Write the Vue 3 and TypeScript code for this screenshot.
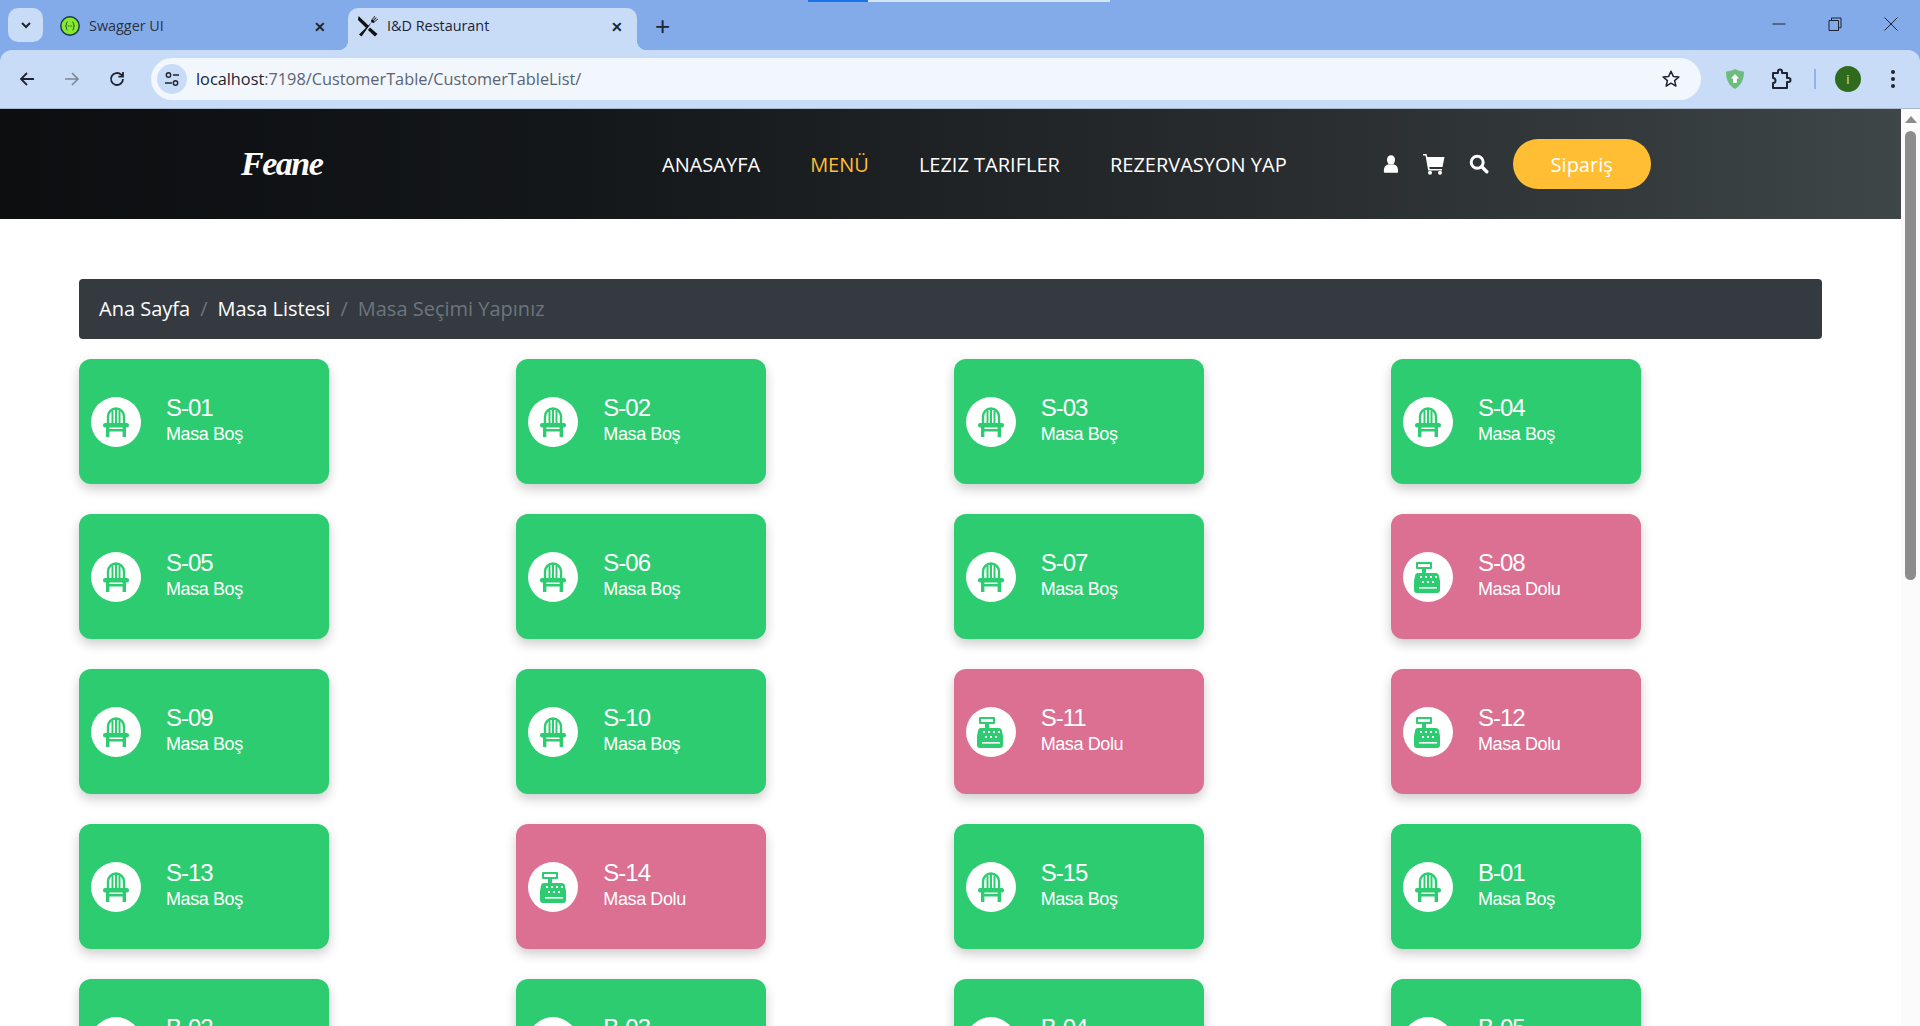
<script setup lang="ts">
interface CustomerTable {
  name: string;
  busy: boolean;
}

const busyNames = ['S-08', 'S-11', 'S-12', 'S-14'];
const names = [
  'S-01', 'S-02', 'S-03', 'S-04', 'S-05', 'S-06', 'S-07', 'S-08', 'S-09', 'S-10',
  'S-11', 'S-12', 'S-13', 'S-14', 'S-15', 'B-01', 'B-02', 'B-03', 'B-04', 'B-05',
];
const tables: CustomerTable[] = names.map((name) => ({ name, busy: busyNames.includes(name) }));
</script>

<template>
  <div class="window">
    <div class="tabstrip">
      <div class="tab-search">
        <svg width="12" height="12" viewBox="0 0 12 12"><path d="M2 4l4 4 4-4" fill="none" stroke="#1f2430" stroke-width="2" /></svg>
      </div>
      <div class="tab inactive">
        <svg class="favicon" width="20" height="20" viewBox="0 0 20 20">
          <circle cx="10" cy="10" r="9.2" fill="#85ea2d" stroke="#173647" stroke-width="1.4" />
          <path d="M7.6 6c-1.6 0-1 3-1.4 3.6-.2.3-.6.4-.8.4.2 0 .6.1.8.4.4.6-.2 3.6 1.4 3.6M12.4 6c1.6 0 1 3 1.4 3.6.2.3.6.4.8.4-.2 0-.6.1-.8.4-.4.6.2 3.6-1.4 3.6" fill="none" stroke="#173647" stroke-width=".9" />
          <path d="M8 10h.8M9.7 10h.8M11.3 10h.8" stroke="#173647" stroke-width="1" />
        </svg>
        <span class="tab-title">Swagger UI</span>
        <span class="tab-close">✕</span>
      </div>
      <div class="tab active">
        <svg class="favicon tools" width="22" height="22" viewBox="0 0 22 22">
          <path d="M1.500 1l10.500 10-2.400 2.400L1 5z" fill="#111" />
          <path d="M13 12.500l7.500 6.500-2.600 2.600-7-6.700z" fill="#111" />
          <path d="M2 19.500L14.500 7.500l-.5-2L17.500 1l.6.5-2.600 3.200.7.6L19 2.200l.7.6-2.900 3 .6.7 3-2.800.6.6-4.400 3.600-2-.4L4.500 21.500z" fill="#111" />
        </svg>
        <span class="tab-title">I&amp;D Restaurant</span>
        <span class="tab-close">✕</span>
      </div>
      <span class="new-tab">+</span>
      <div class="window-controls">
        <svg width="14" height="14" viewBox="0 0 14 14"><path d="M0.5 7h13" stroke="#1c2433" stroke-width="1" /></svg>
        <svg width="14" height="14" viewBox="0 0 14 14"><path d="M1 3.5h9.5v10H1zM3.5 3.5V1H13v9.800h-2.500" fill="none" stroke="#1c2433" stroke-width="1" /></svg>
        <svg width="14" height="14" viewBox="0 0 14 14"><path d="M0.5 0.5l13 13M13.5 0.5l-13 13" stroke="#1c2433" stroke-width="1" /></svg>
      </div>
    </div>

    <div class="toolbar">
      <svg class="tool" width="18" height="18" viewBox="0 0 18 18"><path d="M16 9H3M9 3L3 9l6 6" fill="none" stroke="#1f2430" stroke-width="1.8" /></svg>
      <svg class="tool" width="18" height="18" viewBox="0 0 18 18"><path d="M2 9h13M9 3l6 6-6 6" fill="none" stroke="#7d8796" stroke-width="1.6" /></svg>
      <svg class="tool" width="18" height="18" viewBox="0 0 18 18"><path d="M15 9a6 6 0 1 1-1.800-4.300L15 6.500M15 2v4.600h-4.600" fill="none" stroke="#1f2430" stroke-width="1.8" /></svg>
      <div class="omnibox">
        <span class="tune">
          <svg width="16" height="16" viewBox="0 0 16 16">
            <circle cx="4.500" cy="4" r="2.200" fill="none" stroke="#1f2430" stroke-width="1.4" />
            <circle cx="11.500" cy="12" r="2.200" fill="none" stroke="#1f2430" stroke-width="1.4" />
            <path d="M9 4h6M1 12h7" stroke="#1f2430" stroke-width="1.4" />
          </svg>
        </span>
        <span class="url">localhost<span class="url-rest">:7198/CustomerTable/CustomerTableList/</span></span>
        <svg class="star" width="20" height="20" viewBox="0 0 20 20"><path d="M10 2.200l2.300 5.200 5.600.5-4.300 3.700 1.300 5.500L10 14.200l-4.900 2.900 1.300-5.500L2.100 7.900l5.600-.5z" fill="none" stroke="#1f2430" stroke-width="1.5" stroke-linejoin="round" /></svg>
      </div>
      <svg class="shield" width="20" height="22" viewBox="0 0 20 22">
        <path d="M10 1c3 1.600 5.500 2.200 9 2.500 0 7.500-2.500 14-9 17.500C3.500 17.500 1 11 1 3.500 4.500 3.200 7 2.600 10 1z" fill="#6cbd7d" />
        <path d="M10 6l4 4.500h-2.200V15H8.200v-4.500H6z" fill="#fff" />
      </svg>
      <svg class="puzzle" width="22" height="22" viewBox="0 0 22 22">
        <path d="M3 5h5V3.500a2 2 0 0 1 4 0V5h5v5h1.500a2 2 0 0 1 0 4H17v6H3v-5a2.500 2.500 0 0 0 0-5z" fill="none" stroke="#1f2430" stroke-width="2" stroke-linejoin="round" />
      </svg>
      <span class="divider"></span>
      <span class="avatar">i</span>
      <svg class="dots" width="6" height="20" viewBox="0 0 6 20"><circle cx="3" cy="3" r="2" fill="#1f2430" /><circle cx="3" cy="10" r="2" fill="#1f2430" /><circle cx="3" cy="17" r="2" fill="#1f2430" /></svg>
    </div>

    <div class="viewport">
      <div class="page">
        <header class="site-header">
          <a class="brand">Feane</a>
          <nav class="site-nav">
            <a>ANASAYFA</a>
            <a class="current">MENÜ</a>
            <a>LEZIZ TARIFLER</a>
            <a>REZERVASYON YAP</a>
          </nav>
          <div class="user-options">
            <svg width="16" height="18" viewBox="0 0 16 18">
              <ellipse cx="8" cy="5" rx="4" ry="4.800" fill="#fff" />
              <path d="M1 17.500c-.6-5 1.200-7.500 4.500-8.300 1.500 1 3.500 1 5 0 3.300.8 5.100 3.300 4.500 8.300-1 .4-13 .4-14 0z" fill="#fff" />
            </svg>
            <svg width="22" height="21" viewBox="0 0 22 21">
              <path d="M0 0h3.500l.8 3H21.500L19.500 13H6.200l.5 2H19v1.500H5.200L2.500 1.500H0z" fill="#fff" />
              <circle cx="7" cy="18.800" r="2" fill="#fff" />
              <circle cx="17" cy="18.800" r="2" fill="#fff" />
            </svg>
            <svg width="20" height="20" viewBox="0 0 20 20">
              <circle cx="8.200" cy="8.200" r="6" fill="none" stroke="#fff" stroke-width="3" />
              <path d="M12.800 12.800l5 5" stroke="#fff" stroke-width="3.400" stroke-linecap="round" />
            </svg>
            <a class="order-btn">Sipariş</a>
          </div>
        </header>

        <main class="content">
          <ol class="breadcrumb">
            <li><a>Ana Sayfa</a></li>
            <li><a>Masa Listesi</a></li>
            <li class="current">Masa Seçimi Yapınız</li>
          </ol>
          <div class="table-grid">
            <div v-for="table in tables" :key="table.name" class="table-cell">
              <div class="table-card" :class="{ busy: table.busy }">
                <span class="table-icon">
                  <svg v-if="table.busy" width="27" height="32" viewBox="0 0 27 32">
                    <path fill-rule="evenodd" d="M3 1h14a1 1 0 0 1 1 1v5a1 1 0 0 1-1 1h-5v4h10c1.500 0 2.500 1 2.800 2l1.200 6v9a3 3 0 0 1-3 3H3a3 3 0 0 1-3-3v-9l1.200-6c.3-1.200 1.300-2 2.800-2h4V8H3a1 1 0 0 1-1-1V2a1 1 0 0 1 1-1zm1 2v3h12V3z" fill="#2ecc71" />
                    <g fill="#fff">
                      <rect x="6" y="15" width="2" height="2" /><rect x="11" y="15" width="2" height="2" /><rect x="16" y="15" width="2" height="2" /><rect x="21" y="15" width="2" height="2" />
                      <rect x="8" y="20" width="2" height="2" /><rect x="13" y="20" width="2" height="2" /><rect x="18" y="20" width="2" height="2" />
                      <rect x="5" y="26" width="18" height="1.600" />
                    </g>
                  </svg>
                  <svg v-else width="26" height="30" viewBox="0 0 26 30">
                    <path d="M5 17V9.500a8 8 0 0 1 16 0V17" fill="none" stroke="#2ecc71" stroke-width="2.400" />
                    <path d="M9.500 3.500V17M13 2v15M16.500 3.500V17" stroke="#2ecc71" stroke-width="2" />
                    <rect x="0" y="16" width="26" height="4.500" rx="2" fill="#2ecc71" />
                    <path d="M3 20h3.400v10H3zM19.600 20H23v10h-3.400zM3 22h20v2.600H3z" fill="#2ecc71" />
                  </svg>
                </span>
                <div class="table-text">
                  <div class="table-name">{{ table.name }}</div>
                  <div class="table-state">{{ table.busy ? 'Masa Dolu' : 'Masa Boş' }}</div>
                </div>
              </div>
            </div>
          </div>
        </main>
      </div>

      <div class="scrollbar">
        <span class="scroll-arrow"></span>
        <span class="scroll-thumb"></span>
      </div>
    </div>
  </div>
</template>

<style>
html,
body {
  margin: 0;
  height: 100%;
  overflow: hidden;
  background: #fff;
}
</style>

<style scoped>
.window {
  width: 1920px;
  height: 1026px;
  display: flex;
  flex-direction: column;
  overflow: hidden;
  background: #84abe9;
  font-family: "Open Sans", "Liberation Sans", sans-serif;
}

/* browser chrome */
.tabstrip {
  height: 50px;
  flex: none;
  display: flex;
  align-items: flex-end;
  padding-left: 8px;
  position: relative;
}
.tabstrip::before {
  content: "";
  position: absolute;
  left: 808px;
  top: 0;
  width: 302px;
  height: 2px;
  background: linear-gradient(90deg, #1a73e8 0 20%, #d7e4f8 20% 100%);
}
.tab-search {
  width: 35px;
  height: 34px;
  margin-bottom: 8px;
  border-radius: 10px;
  background: #c9dcf7;
  display: flex;
  align-items: center;
  justify-content: center;
}
.tab {
  width: 289px;
  height: 42px;
  flex: none;
  box-sizing: border-box;
  padding: 0 12px 6px 17px;
  display: flex;
  align-items: center;
  font-size: 14.400px;
  color: #2a3240;
  border-radius: 10px 10px 0 0;
}
.tab.inactive {
  width: 305px;
  padding-right: 20px;
}
.tab.active {
  background: #c9dcf7;
  padding-left: 9px;
  color: #1c2433;
  position: relative;
}
.tab.active::before,
.tab.active::after {
  content: "";
  position: absolute;
  bottom: 0;
  width: 10px;
  height: 10px;
}
.tab.active::before {
  left: -10px;
  background: radial-gradient(circle at 0 0, transparent 10px, #c9dcf7 10.500px);
}
.tab.active::after {
  right: -10px;
  background: radial-gradient(circle at 100% 0, transparent 10px, #c9dcf7 10.500px);
}
.favicon {
  flex: none;
  margin-right: 9px;
}
.tools {
  margin-right: 8px;
}
.tab-title {
  flex: 1;
  margin-bottom: 2px;
  white-space: nowrap;
}
.tab-close {
  font-size: 14px;
  font-weight: 700;
  color: #1c2433;
  width: 16px;
  text-align: center;
}
.new-tab {
  margin: 0 0 7px 18px;
  font-size: 26px;
  line-height: 34px;
  font-family: "Liberation Sans", sans-serif;
  color: #1c2433;
}
.window-controls {
  margin: 0 22px 19px auto;
  display: flex;
  gap: 42px;
}
.toolbar {
  height: 58px;
  flex: none;
  box-sizing: border-box;
  border-radius: 12px 12px 0 0;
  background: #c9dcf7;
  display: flex;
  align-items: center;
  padding-left: 18px;
}
.tool {
  margin-right: 27px;
  flex: none;
}
.tool:nth-child(3) {
  margin-right: 25px;
}
.omnibox {
  width: 1550px;
  height: 42px;
  flex: none;
  box-sizing: border-box;
  border-radius: 21px;
  background: #f2f6fd;
  display: flex;
  align-items: center;
  padding: 0 20px 0 6px;
}
.tune {
  width: 30px;
  height: 30px;
  border-radius: 50%;
  background: #c9dcf7;
  display: flex;
  align-items: center;
  justify-content: center;
}
.url {
  margin-left: 9px;
  flex: 1;
  font-size: 16.300px;
  color: #1c2433;
}
.url-rest {
  color: #5a6472;
}
.shield {
  margin-left: 24px;
}
.puzzle {
  margin-left: 25px;
}
.divider {
  width: 2px;
  height: 20px;
  margin-left: 22px;
  background: #8fb4ea;
}
.avatar {
  width: 26px;
  height: 26px;
  margin-left: 19px;
  border-radius: 50%;
  background: #2f6b1e;
  color: #cfe3c6;
  font-size: 13px;
  display: flex;
  align-items: center;
  justify-content: center;
}
.dots {
  margin-left: 29px;
}

/* page */
.viewport {
  flex: 1;
  min-height: 0;
  display: flex;
  border-top: 1px solid #a9b8cc;
  background: #fff;
}
.page {
  flex: 1;
  min-width: 0;
  overflow: hidden;
}
.site-header {
  height: 110px;
  display: flex;
  align-items: center;
  padding-left: 241px;
  background: linear-gradient(90deg, #0c0e10 0%, #14171a 30%, #2a2e30 70%, #3e4648 100%);
  color: #fff;
}
.brand {
  width: 421px;
  font-family: "Liberation Serif", serif;
  font-style: italic;
  font-weight: 700;
  font-size: 34px;
  letter-spacing: -1.500px;
}
.site-nav {
  display: flex;
  gap: 50px;
  font-size: 20px;
}
.site-nav .current {
  color: #ffbe33;
}
.user-options {
  display: flex;
  align-items: center;
  margin-left: 96px;
  gap: 24px;
}
.order-btn {
  width: 138px;
  height: 50px;
  border-radius: 25px;
  background: #ffbe33;
  font-size: 20px;
  display: flex;
  align-items: center;
  justify-content: center;
}
.content {
  padding: 60px 0 0 79px;
}
.breadcrumb {
  width: 1743px;
  height: 60px;
  box-sizing: border-box;
  margin: 0 0 20px;
  padding: 0 20px 2px;
  list-style: none;
  display: flex;
  align-items: center;
  border-radius: 4px;
  background: #343a40;
  color: #fff;
  font-size: 20px;
}
.breadcrumb li + li::before {
  content: "/";
  padding: 0 10px;
  color: #6c757d;
}
.breadcrumb .current {
  color: #6c757d;
}
.table-grid {
  display: grid;
  grid-template-columns: repeat(4, 437.330px);
  row-gap: 30px;
}
.table-card {
  width: 250px;
  height: 125px;
  box-sizing: border-box;
  padding-left: 12px;
  display: flex;
  align-items: center;
  border-radius: 12px;
  background: #2ecc71;
  color: #fff;
  box-shadow: 0 5px 12px rgba(0, 0, 0, 0.2);
  font-family: "Liberation Sans", Arial, sans-serif;
}
.table-card.busy {
  background: #db7093;
}
.table-icon {
  width: 50px;
  height: 50px;
  flex: none;
  border-radius: 50%;
  background: #fff;
  display: flex;
  align-items: center;
  justify-content: center;
}
.table-text {
  margin: 0 0 2px 25px;
}
.table-name {
  font-size: 24px;
  letter-spacing: -1px;
  line-height: 28px;
}
.table-state {
  font-size: 18px;
  letter-spacing: -0.400px;
  line-height: 25px;
}
.scrollbar {
  width: 19px;
  flex: none;
  position: relative;
  background: #fbfbfb;
}
.scroll-arrow {
  position: absolute;
  left: 4px;
  top: 7px;
  width: 0;
  height: 0;
  border-left: 6px solid transparent;
  border-right: 6px solid transparent;
  border-bottom: 7px solid #8c8c8c;
}
.scroll-thumb {
  position: absolute;
  left: 4px;
  top: 22px;
  width: 11px;
  height: 449px;
  border-radius: 6px;
  background: #8c8c8c;
}
</style>
